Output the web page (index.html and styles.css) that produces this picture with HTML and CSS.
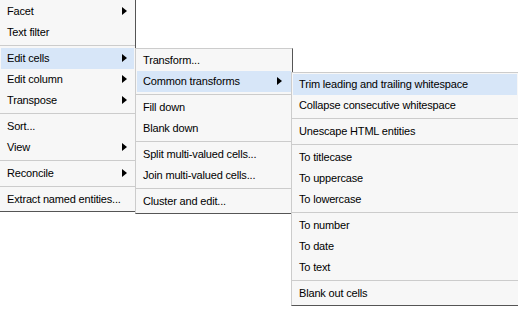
FILE: index.html
```html
<!DOCTYPE html>
<html>
<head>
<meta charset="utf-8">
<link rel="stylesheet" href="styles.css">
</head>
<body>
<div class="menu menu-main">
  <div class="item sub">Facet</div>
  <div class="item">Text filter</div>
  <div class="sep"></div>
  <div class="item sub active">Edit cells</div>
  <div class="item sub">Edit column</div>
  <div class="item sub">Transpose</div>
  <div class="sep"></div>
  <div class="item">Sort...</div>
  <div class="item sub">View</div>
  <div class="sep"></div>
  <div class="item sub">Reconcile</div>
  <div class="sep"></div>
  <div class="item">Extract named entities...</div>
</div>
<div class="menu menu-edit">
  <div class="item">Transform...</div>
  <div class="item sub active">Common transforms</div>
  <div class="sep"></div>
  <div class="item">Fill down</div>
  <div class="item">Blank down</div>
  <div class="sep"></div>
  <div class="item">Split multi-valued cells...</div>
  <div class="item">Join multi-valued cells...</div>
  <div class="sep"></div>
  <div class="item">Cluster and edit...</div>
</div>
<div class="menu menu-common">
  <div class="item active">Trim leading and trailing whitespace</div>
  <div class="item">Collapse consecutive whitespace</div>
  <div class="sep"></div>
  <div class="item">Unescape HTML entities</div>
  <div class="sep"></div>
  <div class="item">To titlecase</div>
  <div class="item">To uppercase</div>
  <div class="item">To lowercase</div>
  <div class="sep"></div>
  <div class="item">To number</div>
  <div class="item">To date</div>
  <div class="item">To text</div>
  <div class="sep"></div>
  <div class="item">Blank out cells</div>
</div>
</body>
</html>
```
FILE: styles.css
```css
html, body {
  margin: 0;
  padding: 0;
  background: #ffffff;
  width: 518px;
  height: 318px;
  overflow: hidden;
  font-family: "Liberation Sans", Arial, sans-serif;
  font-size: 11px;
  letter-spacing: -0.17px;
  color: #000;
}
.menu {
  position: absolute;
  box-sizing: border-box;
  background: #f7f7f7;
  border: 1px solid;
  border-color: #cccccc #555555 #555555 #cccccc;
  padding: 1px;
}
.menu-main {
  left: -1px;
  top: -1px;
  width: 137px;
}
.menu-edit {
  left: 135px;
  top: 48px;
  width: 158px;
}
.menu-common {
  left: 291px;
  top: 72px;
  width: 228px;
}
.item {
  position: relative;
  height: 21px;
  line-height: 21px;
  padding-left: 6px;
  white-space: nowrap;
}
.active {
  background: #d7e6f8;
}
.sub::after {
  content: "";
  position: absolute;
  right: 7px;
  top: 6px;
  border-style: solid;
  border-width: 4.5px 0 4.5px 5px;
  border-color: transparent transparent transparent #000;
}
.menu-edit .sub::after {
  right: 9px;
}
.sep {
  height: 1px;
  background: #cccccc;
  margin: 2px -1px;
}
```
